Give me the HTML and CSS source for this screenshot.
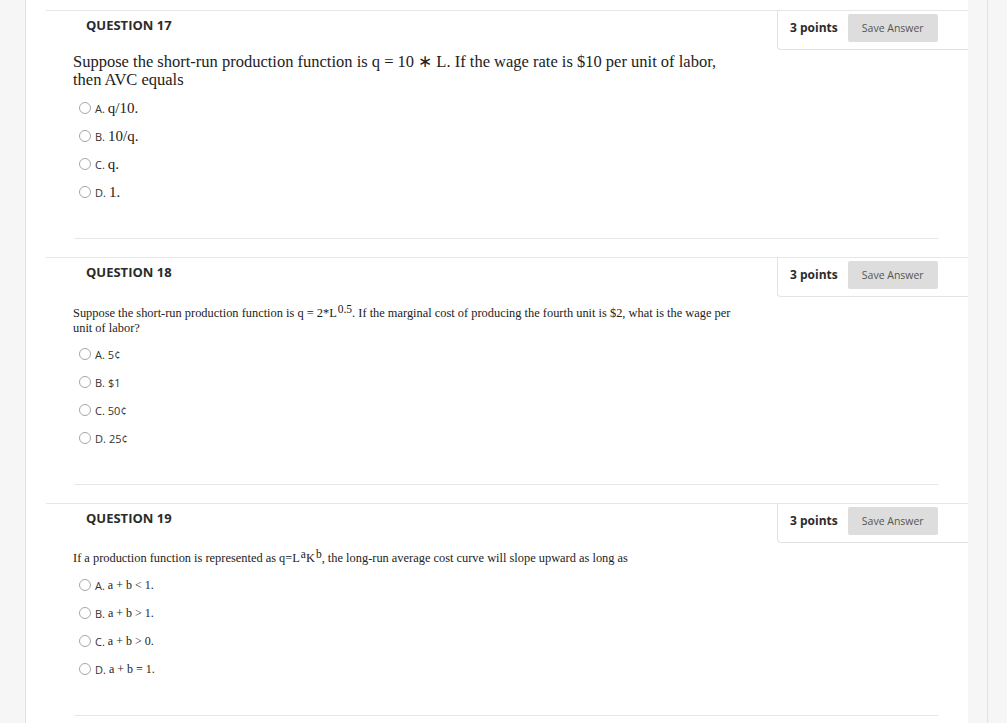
FILE: index.html
```html
<!DOCTYPE html>
<html lang="en">
<head>
<meta charset="utf-8">
<title>Questions</title>
<link rel="stylesheet" href="styles.css">
</head>
<body>
<div class="page">
  <aside class="rail-left"></aside>
  <main class="content">
    <section class="question">
      <header class="q-head">
        <h2 class="q-title">QUESTION 17</h2>
        <div class="q-points"><span class="pts">3 points</span><button class="save" type="button">Save Answer</button></div>
      </header>
      <div class="q-body">
        <p class="q-text q-text-pal">Suppose the short-run production function is q = 10 ∗ L. If the wage rate is $10 per unit of labor, then AVC equals</p>
        <ul class="options options-pal">
          <li class="opt"><span class="radio"></span><span class="lab">A.</span><span class="val">q/10.</span></li>
          <li class="opt"><span class="radio"></span><span class="lab">B.</span><span class="val">10/q.</span></li>
          <li class="opt"><span class="radio"></span><span class="lab">C.</span><span class="val">q.</span></li>
          <li class="opt"><span class="radio"></span><span class="lab">D.</span><span class="val">1.</span></li>
        </ul>
        <hr class="q-sep">
      </div>
    </section>

    <section class="question">
      <header class="q-head">
        <h2 class="q-title">QUESTION 18</h2>
        <div class="q-points"><span class="pts">3 points</span><button class="save" type="button">Save Answer</button></div>
      </header>
      <div class="q-body">
        <p class="q-text q-text-tms q18">Suppose the short-run production function is q = 2*L<sup>0.5</sup>. If the marginal cost of producing the fourth unit is $2, what is the wage per unit of labor?</p>
        <ul class="options options-sans q18-opts">
          <li class="opt"><span class="radio"></span><span class="lab">A.</span><span class="val">5¢</span></li>
          <li class="opt"><span class="radio"></span><span class="lab">B.</span><span class="val">$1</span></li>
          <li class="opt"><span class="radio"></span><span class="lab">C.</span><span class="val">50¢</span></li>
          <li class="opt"><span class="radio"></span><span class="lab">D.</span><span class="val">25¢</span></li>
        </ul>
        <hr class="q-sep">
      </div>
    </section>

    <section class="question">
      <header class="q-head">
        <h2 class="q-title">QUESTION 19</h2>
        <div class="q-points"><span class="pts">3 points</span><button class="save" type="button">Save Answer</button></div>
      </header>
      <div class="q-body">
        <p class="q-text q-text-tms q19">If a production function is represented as q=L<sup>a</sup>K<sup>b</sup>, the long-run average cost curve will slope upward as long as</p>
        <ul class="options options-tms">
          <li class="opt"><span class="radio"></span><span class="lab">A.</span><span class="val">a + b &lt; 1.</span></li>
          <li class="opt"><span class="radio"></span><span class="lab">B.</span><span class="val">a + b &gt; 1.</span></li>
          <li class="opt"><span class="radio"></span><span class="lab">C.</span><span class="val">a + b &gt; 0.</span></li>
          <li class="opt"><span class="radio"></span><span class="lab">D.</span><span class="val">a + b = 1.</span></li>
        </ul>
        <hr class="q-sep">
      </div>
    </section>
  </main>
  <aside class="rail-right"><div class="rail-right-line"></div></aside>
</div>
</body>
</html>
```

FILE: styles.css
```css
* { box-sizing: border-box; }

html, body {
  margin: 0;
  padding: 0;
  background: #ffffff;
  font-family: "Open Sans", "Liberation Sans", sans-serif;
  color: #333333;
}

.page {
  display: flex;
  height: 100vh;
  overflow: hidden;
}

.rail-left {
  width: 26px;
  flex: none;
  background: #f6f6f6;
  border-right: 1px solid #e2e2e2;
}

.content {
  flex: 1;
  padding-top: 10px;
  background: #ffffff;
}

.rail-right {
  width: 39px;
  flex: none;
  background: #f6f6f6;
  padding-left: 19px;
}

.rail-right-line {
  height: 100%;
  border-left: 1px solid #e2e2e2;
}

.question {
  margin-left: 20px;
  border-top: 1px solid #e6e6e6;
  margin-bottom: 18px;
}

.q-head {
  display: flex;
  justify-content: space-between;
  align-items: flex-start;
  height: 39px;
}

.q-title {
  margin: 0;
  padding: 5px 0 0 40px;
  font-size: 13px;
  line-height: 18px;
  font-weight: 700;
  color: #2b2b2b;
}

.q-points {
  display: flex;
  align-items: center;
  height: 39px;
  width: 191px;
  padding: 0 30px 5px 12px;
  border-left: 1px solid #e3e3e3;
  border-bottom: 1px solid #e3e3e3;
  border-bottom-left-radius: 4px;
  gap: 10px;
}

.pts {
  font-size: 12px;
  font-weight: 700;
  color: #2b2b2b;
  white-space: nowrap;
}

.save {
  width: 90px;
  height: 28px;
  border: none;
  border-radius: 2px;
  background: #dddddd;
  color: #555555;
  font-family: "Open Sans", "Liberation Sans", sans-serif;
  font-size: 10.5px;
  padding: 0;
}

.q-body {
  padding: 0 30px 0 27px;
}

.q-text {
  margin: 0;
  max-width: 664px;
  color: #222222;
}

.q-text-pal {
  margin-top: 3px;
  font-family: "Liberation Serif", "Times New Roman", serif;
  font-size: 16.5px;
  line-height: 18px;
}

.q-text-tms {
  font-family: "Liberation Serif", "Times New Roman", serif;
  font-size: 12.4px;
  line-height: 15px;
}

.q18 { margin-top: 9px; }
.q19 { margin-top: 8px; }

.q-text sup {
  font-size: 11.5px;
  line-height: 0;
  vertical-align: 4px;
  margin-left: 1px;
}

.options {
  list-style: none;
  margin: 5px 0 0 0;
  padding: 0 0 0 6px;
}

.q18-opts { margin-top: 4px; }

.opt {
  display: flex;
  align-items: center;
  height: 28px;
}

.radio {
  width: 12px;
  height: 12px;
  border: 1px solid #a6a6a6;
  border-radius: 50%;
  background: #ffffff;
  margin-right: 4px;
  flex: none;
}

.lab {
  font-family: "Open Sans", "Liberation Sans", sans-serif;
  font-size: 11px;
  color: #333333;
  margin-right: 3px;
}

.val { color: #222222; }

.options-pal .val {
  font-family: "Liberation Serif", "Times New Roman", serif;
  font-size: 15px;
}

.options-sans .val {
  font-family: "Open Sans", "Liberation Sans", sans-serif;
  font-size: 11px;
  color: #333333;
}

.options-tms .val {
  font-family: "Liberation Serif", "Times New Roman", serif;
  font-size: 12px;
}

.q-sep {
  margin: 32px 0 0 1px;
  border: none;
  border-top: 1px solid #e6e6e6;
  height: 0;
}
```
